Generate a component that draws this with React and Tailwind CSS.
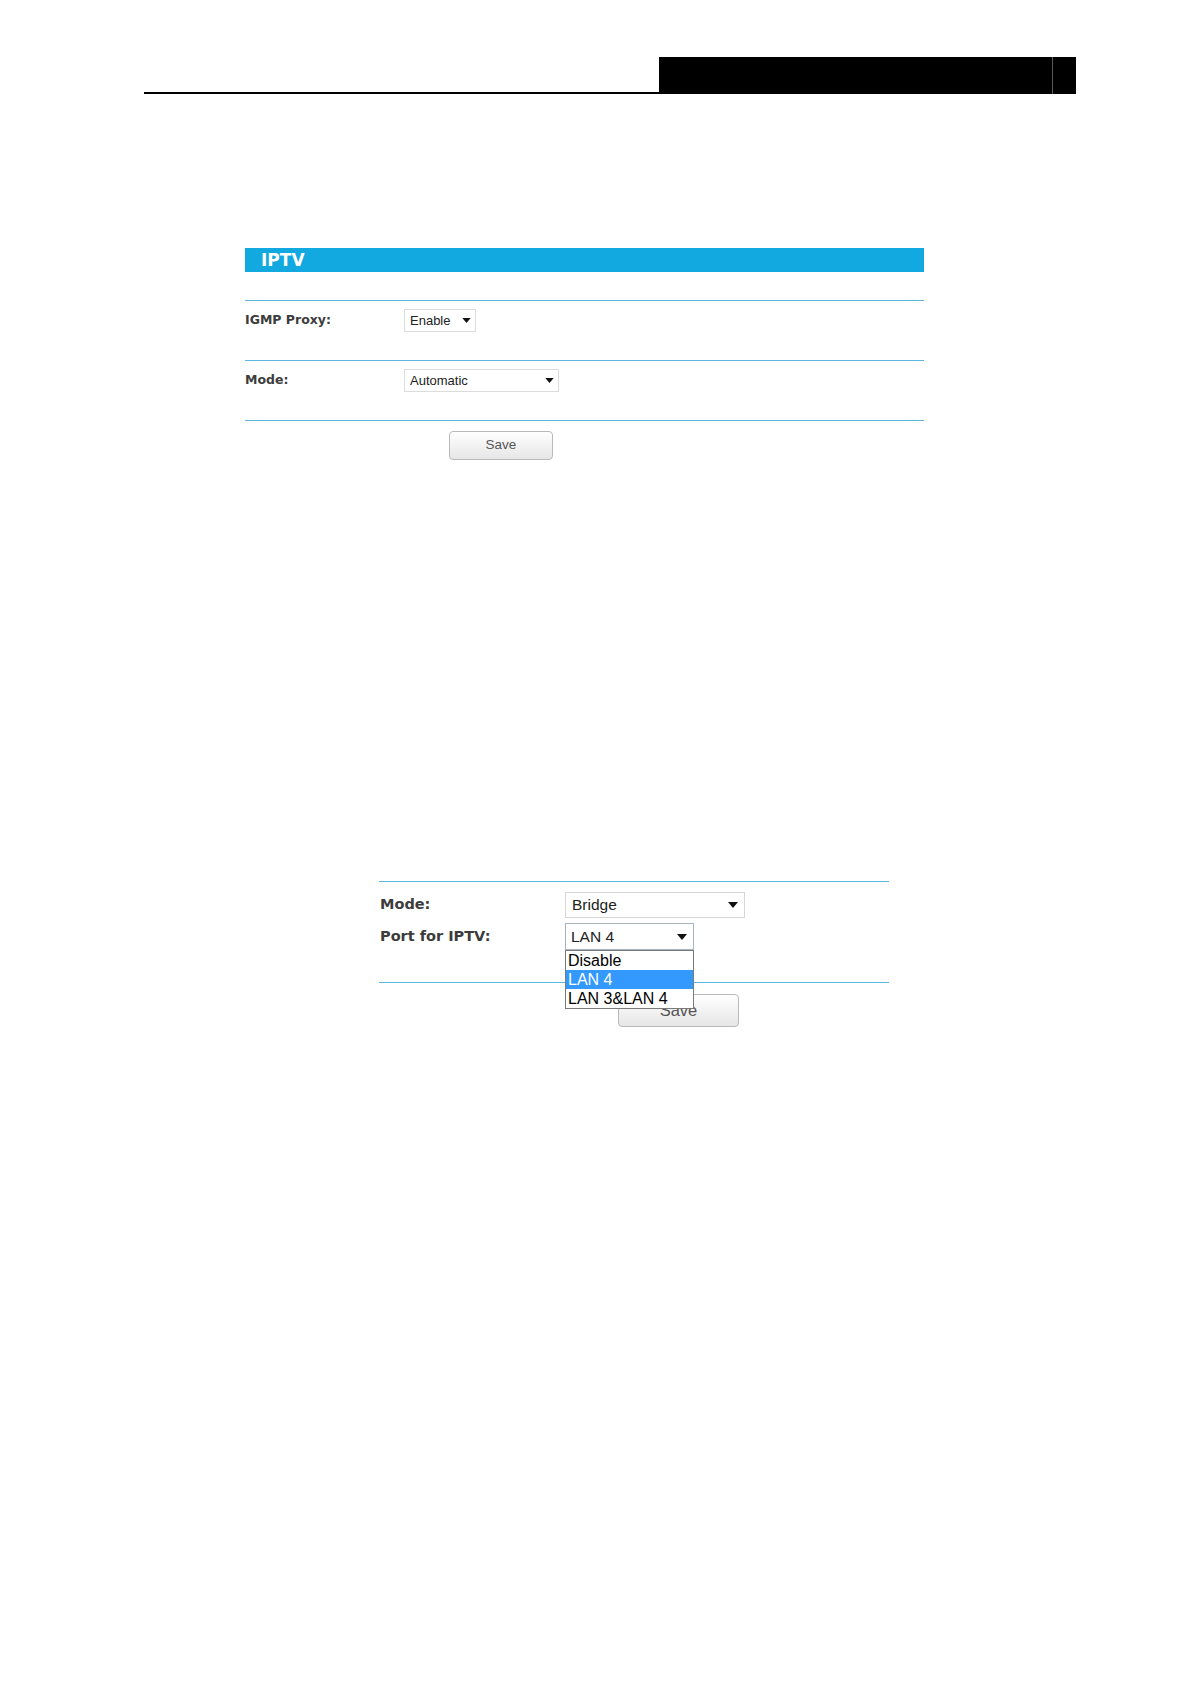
const label = { fontFamily: '"DejaVu Sans", Verdana, sans-serif' };
const arial = { fontFamily: '"Liberation Sans", Arial, sans-serif' };

function Arrow({ className }) {
  return (
    <svg className={className} viewBox="0 0 10 6" aria-hidden>
      <path d="M0 0h10L5 6z" fill="#111" />
    </svg>
  );
}

function FakeSelect({ value, className, textClass, arrowClass }) {
  return (
    <div
      className={`flex items-center justify-between bg-white ${className}`}
      style={arial}
    >
      <span className={textClass}>{value}</span>
      <Arrow className={arrowClass} />
    </div>
  );
}

function SaveButton({ className, textClass }) {
  return (
    <button
      type="button"
      className={`flex items-center justify-center rounded-[4px] border border-[#b9b9b9] bg-gradient-to-b from-white to-[#e6e6e6] text-[#555] ${className}`}
      style={arial}
    >
      <span className={textClass}>Save</span>
    </button>
  );
}

export default function App() {
  return (
    <div className="min-h-[1684px] w-[1191px] bg-white">
      {/* page header */}
      <div className="ml-[144px] flex w-[932px] pt-[57px]">
        <div className="flex-1 border-b-[2px] border-black" />
        <div className="flex h-[37px] w-[417px] justify-end bg-black">
          <div className="h-full w-[24px] border-l border-[#5a5a5a]" />
        </div>
      </div>

      {/* IPTV settings */}
      <div className="ml-[245px] mt-[154px] w-[679px]">
        <div className="flex h-[24px] items-center bg-[#12a8e0] pl-[16px]">
          <span className="text-[17px] font-bold leading-none text-white" style={label}>
            IPTV
          </span>
        </div>
        <div className="h-[28px]" />
        <div className="flex h-[60px] items-start border-t border-[#5cb7de] pt-[8px]">
          <div className="flex h-[23px] w-[159px] items-center text-[12.5px] font-bold text-[#3c3c3c]" style={label}>
            IGMP Proxy:
          </div>
          <FakeSelect
            value="Enable"
            className="h-[23px] w-[72px] border border-[#dcdcdc] pl-[5px] pr-[4px]"
            textClass="text-[13px] text-[#222]"
            arrowClass="h-[5px] w-[9px]"
          />
        </div>
        <div className="flex h-[60px] items-start border-t border-[#5cb7de] pt-[8px]">
          <div className="flex h-[23px] w-[159px] items-center text-[12.5px] font-bold text-[#3c3c3c]" style={label}>
            Mode:
          </div>
          <FakeSelect
            value="Automatic"
            className="h-[23px] w-[155px] border border-[#dcdcdc] pl-[5px] pr-[4px]"
            textClass="text-[13px] text-[#222]"
            arrowClass="h-[5px] w-[9px]"
          />
        </div>
        <div className="border-t border-[#5cb7de] pl-[204px] pt-[10px]">
          <SaveButton className="h-[29px] w-[104px]" textClass="text-[13.5px]" />
        </div>
      </div>

      {/* Bridge mode with open port list */}
      <div className="ml-[379px] mt-[421px] w-[510px]">
        <div className="border-t border-[#5cb7de] pt-[10px]">
          <div className="flex items-center">
            <div className="w-[186px] pl-[1px] text-[14.5px] font-bold text-[#3c3c3c]" style={label}>
              Mode:
            </div>
            <FakeSelect
              value="Bridge"
              className="h-[26px] w-[180px] border border-[#d6d6d6] pl-[6px] pr-[6px]"
              textClass="text-[15.5px] text-[#222]"
              arrowClass="h-[6px] w-[10px]"
            />
          </div>
          <div className="mt-[5px] flex items-center">
            <div className="w-[186px] pl-[1px] text-[14.5px] font-bold text-[#3c3c3c]" style={label}>
              Port for IPTV:
            </div>
            <div className="relative">
              <FakeSelect
                value="LAN 4"
                className="h-[27px] w-[129px] border border-[#a9b4c0] pl-[5px] pr-[6px]"
                textClass="text-[15.5px] text-[#222]"
                arrowClass="h-[6px] w-[10px]"
              />
              <div
                className="absolute left-0 top-[27px] z-10 w-[129px] border border-[#7a7a7a] bg-white text-[16px] leading-[19px] text-black"
                style={arial}
              >
                <div className="pl-[2px]">Disable</div>
                <div className="bg-[#3399ff] pl-[2px] text-white">LAN 4</div>
                <div className="pl-[2px]">LAN 3&amp;LAN 4</div>
              </div>
            </div>
          </div>
          <div className="h-[32px]" />
        </div>
        <div className="border-t border-[#5cb7de] pl-[239px] pt-[11px]">
          <SaveButton className="h-[33px] w-[121px]" textClass="text-[16.5px]" />
        </div>
      </div>
    </div>
  );
}
